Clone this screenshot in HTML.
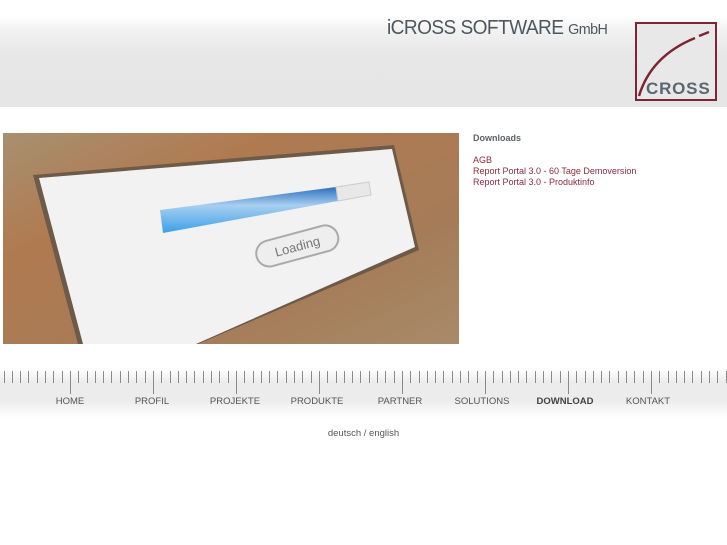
<!DOCTYPE html>
<html><head><style>
body{margin:0;width:727px;height:545px;background:#fff;position:relative;font-family:"Liberation Sans",sans-serif;overflow:hidden}
.hdr{position:absolute;left:0;top:15px;width:727px;height:92px;background:linear-gradient(#fff 0,#f2f2f2 15px,#e7e7e7 40px,#e6e6e6 100%)}
.title{position:absolute;left:387px;top:17px;font-size:20px;color:#4d575c;letter-spacing:-0.6px;transform:scaleX(0.955);transform-origin:left}
.title small{font-size:15px}
.logo{position:absolute;left:635px;top:22px;width:78px;height:75px;border:2px solid #7d2535;background:#e8e8e8}
.logo span{position:absolute;left:9px;bottom:0px;font-weight:bold;font-size:17px;color:#5b6670;letter-spacing:0.8px}
.dl{position:absolute;left:473px;top:133px;font-size:9px;line-height:11px;color:#8a2a3e}
.dl b{color:#5b6168}
.nav{position:absolute;left:0;top:368px;width:727px;height:50px;background:linear-gradient(#fff 0,#ececec 30%,#ececec 65%,#fff 100%)}
.nav a{position:absolute;top:28px;font-size:9.5px;color:#555;text-decoration:none;transform:translateX(-50%)}
.lang{position:absolute;left:0;width:727px;top:428px;text-align:center;font-size:9.5px;color:#555}
</style></head><body>
<div class="hdr"></div>
<div class="title">iCROSS SOFTWARE <small>GmbH</small></div>
<div class="logo"><svg width="78" height="75" style="position:absolute;left:0;top:0"><path d="M2 72 Q14 32 58 14" stroke="#7d2535" stroke-width="2.5" fill="none"/><path d="M62 12 L72 8" stroke="#7d2535" stroke-width="2.5"/></svg><span>CROSS</span></div>
<svg style="position:absolute;left:3px;top:133px" width="456" height="211">
<defs>
<linearGradient id="bg" x1="0" y1="0" x2="1" y2="1"><stop offset="0" stop-color="#a89070"/><stop offset=".3" stop-color="#b07a50"/><stop offset=".7" stop-color="#a57c58"/><stop offset="1" stop-color="#a88a6a"/></linearGradient>
<linearGradient id="bar" x1="0" y1="0" x2="0" y2="1"><stop offset="0" stop-color="#2a6fc0"/><stop offset=".4" stop-color="#a8cff0"/><stop offset="1" stop-color="#3aa0e8"/></linearGradient>
</defs>
<rect width="456" height="211" fill="url(#bg)"/>
<polygon points="30,42 391,12 416,117 195,211 75,211" fill="#6e5a48"/>
<polygon points="36,45 389,16 412,114 193,211 80,211" fill="#f2f2f2"/>
<polygon points="157,77 333,54 335,68 160,100" fill="url(#bar)"/>
<polygon points="333,54 366,49 368,62 335,68" fill="#e8e8e8" stroke="#ccc"/>
<g transform="rotate(-15 294 112)"><rect x="252" y="100" width="84" height="26" rx="13" fill="#eee" stroke="#aaa" stroke-width="2"/><text x="294" y="118" text-anchor="middle" font-size="13" fill="#777" font-family="Liberation Sans">Loading</text></g>
</svg>
<div class="dl"><b>Downloads</b><br><br>AGB<br>Report Portal 3.0 - 60 Tage Demoversion<br>Report Portal 3.0 - Produktinfo</div>
<div class="nav">
<svg width="727" height="30" style="position:absolute;left:0;top:0">
<g stroke="#8a8a8a" stroke-width="1" id="ticks"></g>
</svg>
<a style="left:70px">HOME</a><a style="left:152px">PROFIL</a><a style="left:235px">PROJEKTE</a><a style="left:317px">PRODUKTE</a><a style="left:400px">PARTNER</a><a style="left:482px">SOLUTIONS</a><a style="left:565px;font-weight:bold;color:#444">DOWNLOAD</a><a style="left:648px">KONTAKT</a>
</div>
<div class="lang">deutsch / english</div>
<script>
var g=document.getElementById('ticks'),s='';
for(var i=0;i<88;i++){var x=3.5+i*8.3;var long=((i-8)%10===0&&i>=8);var xx=Math.round(x)+0.5;s+='<line x1="'+xx+'" y1="3" x2="'+xx+'" y2="'+(long?26:15)+'"/>';}
g.innerHTML=s;
</script>
</body></html>
